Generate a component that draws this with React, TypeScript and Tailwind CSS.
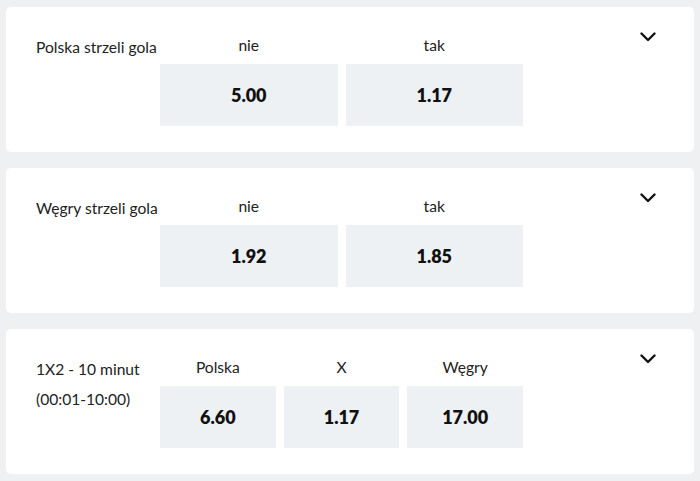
import React from "react";

type Market = {
  title: string[];
  options: { label: string; odds: string }[];
};

const markets: Market[] = [
  {
    title: ["Polska strzeli gola"],
    options: [
      { label: "nie", odds: "5.00" },
      { label: "tak", odds: "1.17" },
    ],
  },
  {
    title: ["Węgry strzeli gola"],
    options: [
      { label: "nie", odds: "1.92" },
      { label: "tak", odds: "1.85" },
    ],
  },
  {
    title: ["1X2 - 10 minut", "(00:01-10:00)"],
    options: [
      { label: "Polska", odds: "6.60" },
      { label: "X", odds: "1.17" },
      { label: "Węgry", odds: "17.00" },
    ],
  },
];

const Chevron = () => (
  <svg width="16" height="10" viewBox="0 0 16 10" fill="none">
    <path
      d="M1.5 1.5L8 8l6.5-6.5"
      stroke="#111"
      strokeWidth="2.4"
      strokeLinecap="round"
      strokeLinejoin="round"
    />
  </svg>
);

const MarketCard = ({ market }: { market: Market }) => {
  return (
    <div className="flex items-start bg-white rounded-[5px] pt-[25px] pb-[26px] pl-[30px] pr-[38px]">
      <div className="w-[124px] text-[15.6px] leading-[30px] text-[#222] whitespace-nowrap">
        {market.title.map((t) => (
          <div key={t}>{t}</div>
        ))}
      </div>
      <div className="flex w-[363px] gap-[8px]">
        {market.options.map((o) => (
          <div key={o.label} className="flex-1 flex flex-col">
            <div className="h-[26px] leading-[26px] text-center text-[15.6px] text-[#222]">
              {o.label}
            </div>
            <button className="mt-[6px] h-[62px] bg-[#eef1f3] text-[18px] font-extrabold text-[#111]">
              {o.odds}
            </button>
          </div>
        ))}
      </div>
      <div className="ml-auto">
        <Chevron />
      </div>
    </div>
  );
};

export default function App() {
  return (
    <div
      className="min-h-[481px] bg-[#eef0f2] px-[6px] pt-[7px] flex flex-col gap-[16px]"
      style={{ fontFamily: "Lato, 'Liberation Sans', sans-serif" }}
    >
      {markets.map((m) => (
        <MarketCard key={m.title[0]} market={m} />
      ))}
    </div>
  );
}
